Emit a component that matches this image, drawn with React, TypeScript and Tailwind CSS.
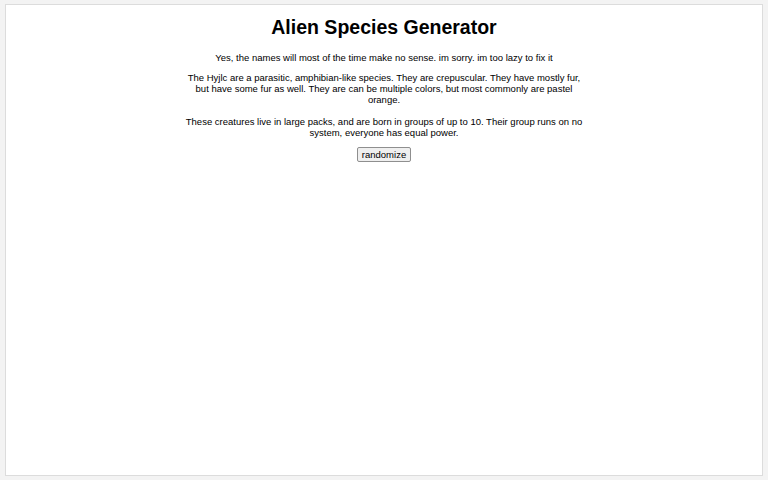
import React from "react";

export default function App() {
  return (
    <div className="w-[768px] h-[480px] bg-[#f3f3f3] pt-[4px] pb-[4px] px-[5px] font-['Liberation_Sans',Arial,sans-serif] text-black">
      <div className="h-[472px] bg-white border border-[#dcdcdc] flex flex-col items-center">
        <h1 className="mt-[11px] text-[19.5px] leading-[22px] font-bold">Alien Species Generator</h1>
        <p className="mt-[14px] text-[9.5px] leading-[11px] text-center">
          Yes, the names will most of the time make no sense. im sorry. im too lazy to fix it
        </p>
        <p className="mt-[9px] w-[402px] text-[9.5px] leading-[11px] text-center">
          The Hyjlc are a parasitic, amphibian-like species. They are crepuscular. They have mostly fur, but have some fur as well. They are can be multiple colors, but most commonly are pastel orange.
        </p>
        <p className="mt-[11px] w-[402px] text-[9.5px] leading-[11px] text-center">
          These creatures live in large packs, and are born in groups of up to 10. Their group runs on no system, everyone has equal power.
        </p>
        <button className="mt-[9px] px-[4px] h-[15px] text-[9.5px] leading-[11px] bg-[#efefef] border border-[#8f8f8f] rounded-[2px]">
          randomize
        </button>
      </div>
    </div>
  );
}
